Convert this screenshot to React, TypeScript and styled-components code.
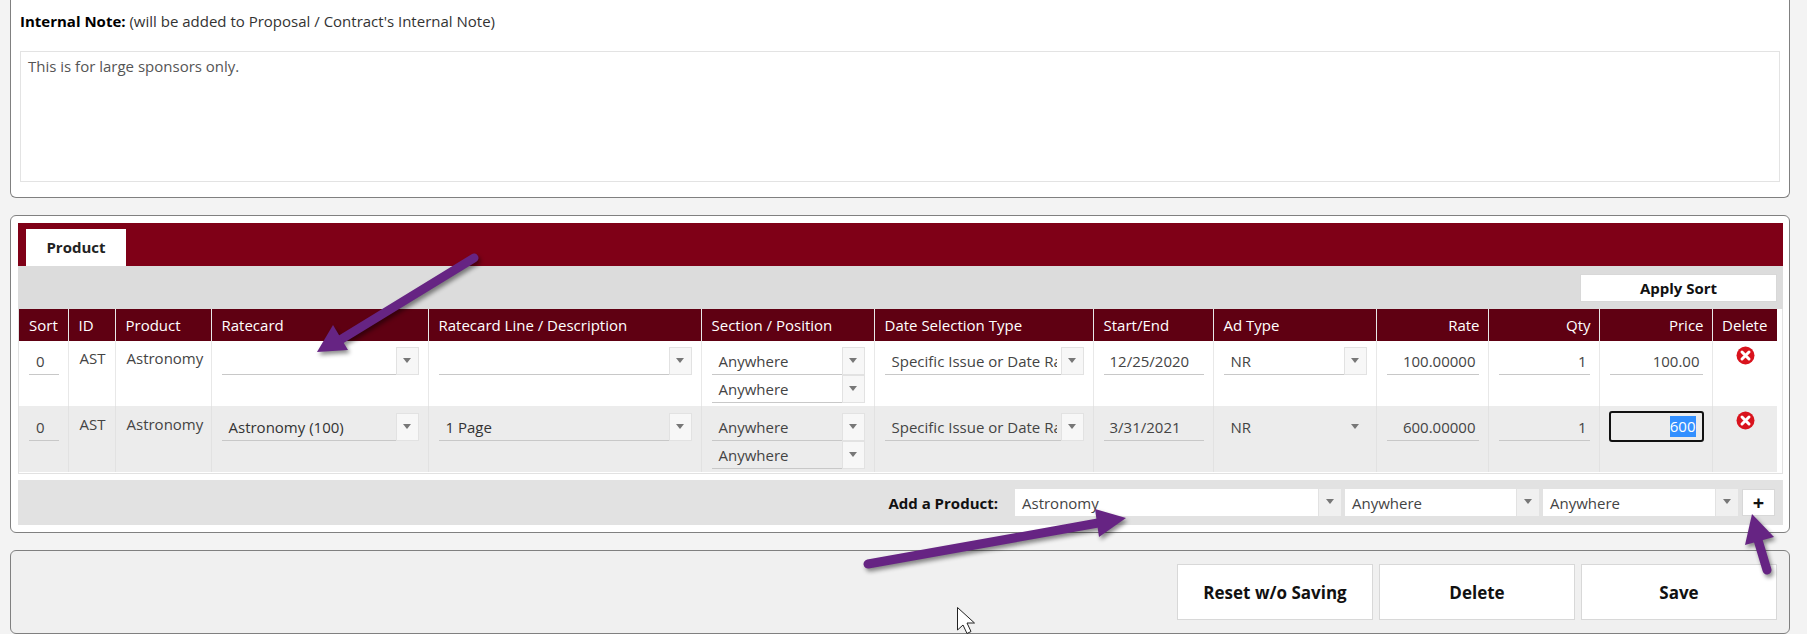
import { FC } from 'react'
import styled, { createGlobalStyle } from 'styled-components'

const GlobalStyle = createGlobalStyle`
  html, body {
    margin: 0;
    padding: 0;
    background: #f3f3f3;
  }

  * {
    box-sizing: border-box;
  }
`

const Page = styled.div`
  position: relative;
  width: 1807px;
  height: 634px;
  overflow: hidden;
  padding: 0 17px 0 10px;
  font-family: 'Open Sans', 'Noto Sans', sans-serif;
  font-size: 15px;
  color: #444;
`

const Panel = styled.section`
  background: #fff;
  border: 1px solid #808080;
  border-radius: 6px;
  margin-bottom: 17px;
  padding: 7px 6px 7px 7px;
`

const NotePanel = styled(Panel)`
  height: 198px;
  padding: 11px 9px 0;
  border-top: none;
  border-radius: 0 0 6px 6px;
`

const NoteLabel = styled.div`
  height: 20px;
  line-height: 20px;
  margin-bottom: 20px;
  color: #333;

  b {
    color: #000;
    font-weight: 700;
  }
`

const NoteBox = styled.div`
  height: 131px;
  padding: 5px 7px;
  border: 1px solid #e3e3e3;
  line-height: 18px;
  color: #555;
`

const TabStrip = styled.div`
  display: flex;
  align-items: flex-end;
  height: 43px;
  padding-left: 8px;
  background: #7f0017;
`

const Tab = styled.div`
  width: 100px;
  height: 37px;
  line-height: 37px;
  text-align: center;
  background: #fff;
  color: #222;
  font-weight: 700;
`

const SortBar = styled.div`
  display: flex;
  justify-content: flex-end;
  align-items: center;
  height: 43px;
  padding-right: 6px;
  background: #dcdcdc;
`

const PlainButton = styled.button<{ $big?: boolean }>`
  width: ${({ $big }) => ($big ? '196px' : '197px')};
  height: ${({ $big }) => ($big ? '56px' : '28px')};
  padding: 0;
  background: #fff;
  border: 1px solid #d8d8d8;
  color: #111;
  font-family: inherit;
  font-size: ${({ $big }) => ($big ? '17px' : '15px')};
  font-weight: 700;
`

const TableWrap = styled.div`
  padding: 0 5px 1px 0;
  border: 1px solid #e2e2e2;
  border-top: none;
  margin-bottom: 6px;
`

const Table = styled.table`
  width: 1758px;
  table-layout: fixed;
  border-collapse: collapse;
`

const Col = styled.col<{ $w: number }>`
  width: ${({ $w }) => $w}px;
`

const Th = styled.th<{ $right?: boolean }>`
  height: 32px;
  padding: 0 8px 0 10px;
  background: #5f0012;
  border-right: 1px solid #e8e8e8;
  color: #fff;
  font-weight: 400;
  white-space: nowrap;
  text-align: ${({ $right }) => ($right ? 'right' : 'left')};

  &:last-child {
    border-right: none;
    padding: 0;
    text-align: center;
  }
`

const Tr = styled.tr<{ $alt?: boolean }>`
  background: ${({ $alt }) => ($alt ? '#ececec' : '#fff')};
  height: ${({ $alt }) => ($alt ? '66px' : '65px')};
`

const Td = styled.td<{ $alt?: boolean }>`
  padding: ${({ $alt }) => ($alt ? '7px' : '6px')} 9px 0 10px;
  vertical-align: top;
  border-right: 1px solid ${({ $alt }) => ($alt ? '#e2e2e2' : '#e8e8e8')};

  &:last-child {
    border-right: none;
    padding: 5px 0 0 1px;
    text-align: center;
  }
`

const CellText = styled.div`
  line-height: 22px;
  padding-left: 1px;
  white-space: nowrap;
`

const Field = styled.div<{ $right?: boolean; $center?: boolean }>`
  height: 28px;
  line-height: 28px;
  padding: 0 ${({ $right }) => ($right ? '3px' : '6px')} 0 ${({ $center }) => ($center ? '7px' : '6px')};
  border-bottom: 1px solid #c8c8c8;
  text-align: ${({ $right }) => ($right ? 'right' : 'left')};
`

const Combo = styled.div<{ $bare?: boolean }>`
  display: flex;
  height: 28px;
  border-bottom: ${({ $bare }) => ($bare ? 'none' : '1px solid #c8c8c8')};
`

const ComboText = styled.div<{ $dark?: boolean }>`
  flex: 1;
  min-width: 0;
  overflow: hidden;
  white-space: nowrap;
  line-height: 29px;
  margin-right: 4px;
  padding-left: 7px;
  color: ${({ $dark }) => ($dark ? '#333' : '#444')};
`

const ComboButton = styled.div<{ $bare?: boolean }>`
  display: flex;
  flex: none;
  align-items: center;
  justify-content: center;
  width: 23px;
  height: 28px;
  padding-bottom: 2px;
  background: ${({ $bare }) => ($bare ? 'transparent' : '#f7f7f7')};
  border: 1px solid ${({ $bare }) => ($bare ? 'transparent' : '#e2e2e2')};

  &::after {
    content: '';
    border-left: 4px solid transparent;
    border-right: 4px solid transparent;
    border-top: 5px solid #777;
  }
`

const FocusedField = styled.div`
  height: 31px;
  margin: -2px -1px 0;
  padding-right: 6px;
  background: transparent;
  border: 2px solid #111;
  border-radius: 3px;
  line-height: 27px;
  text-align: right;

  span {
    display: inline-block;
    height: 21px;
    line-height: 21px;
    background: #3390ff;
    color: #fff;
  }
`

const AddBar = styled.div`
  display: flex;
  justify-content: flex-end;
  align-items: center;
  height: 45px;
  padding-right: 8px;
  background: #e2e2e2;
`

const AddLabel = styled.label`
  margin-right: 17px;
  color: #111;
  font-weight: 700;
`

const AddCombo = styled.div<{ $w: number }>`
  display: flex;
  width: ${({ $w }) => $w}px;
  height: 27px;
  margin-right: 4px;
  background: #fff;
`

const AddText = styled.div`
  flex: 1;
  line-height: 28px;
  padding-left: 7px;
  color: #444;
`

const AddArrow = styled(ComboButton)`
  height: 27px;
  background: #f0f0f0;
  border: none;
  border-left: 1px solid #e2e2e2;
`

const PlusButton = styled.button`
  width: 33px;
  height: 27px;
  padding: 0;
  background: #fff;
  border: 1px solid #d8d8d8;
  color: #111;
  font-family: inherit;
  font-size: 20px;
  font-weight: 700;
  line-height: 22px;
`

const ActionPanel = styled(Panel)`
  display: flex;
  justify-content: flex-end;
  gap: 6px;
  height: 84px;
  margin: 0;
  padding: 13px 12px 0 0;
  background: #f0f0f0;
`

const Overlay = styled.svg`
  position: absolute;
  top: 0;
  left: 0;
  pointer-events: none;
`

const PurpleArrow = styled.g`
  filter: drop-shadow(2px 3px 2px rgba(0, 0, 0, 0.45));
`

const DeleteIcon: FC = () => (
  <svg width='19' height='19' viewBox='0 0 19 19'>
    <circle cx='9.5' cy='9.5' r='9' fill='#d9131d' />
    <path d='M6 6l7 7M13 6l-7 7' stroke='#fff' strokeWidth='3' strokeLinecap='round' />
  </svg>
)

const columns = [49, 47, 96, 217, 273, 173, 219, 120, 163, 112, 111, 113, 65]

const DATE_TYPE = 'Specific Issue or Date Range'

const App: FC = () => {
  return (
    <Page>
      <GlobalStyle />

      <NotePanel>
        <NoteLabel>
          <b>Internal Note:</b> (will be added to Proposal / Contract's Internal Note)
        </NoteLabel>
        <NoteBox>This is for large sponsors only.</NoteBox>
      </NotePanel>

      <Panel>
        <TabStrip>
          <Tab>Product</Tab>
        </TabStrip>
        <SortBar>
          <PlainButton>Apply Sort</PlainButton>
        </SortBar>

        <TableWrap>
          <Table>
            <colgroup>
              {columns.map((w, i) => (
                <Col key={i} $w={w} />
              ))}
            </colgroup>
            <thead>
              <tr>
                <Th>Sort</Th>
                <Th>ID</Th>
                <Th>Product</Th>
                <Th>Ratecard</Th>
                <Th>Ratecard Line / Description</Th>
                <Th>Section / Position</Th>
                <Th>Date Selection Type</Th>
                <Th>Start/End</Th>
                <Th>Ad Type</Th>
                <Th $right>Rate</Th>
                <Th $right>Qty</Th>
                <Th $right>Price</Th>
                <Th>Delete</Th>
              </tr>
            </thead>
            <tbody>
              <Tr>
                <Td><Field $center>0</Field></Td>
                <Td><CellText>AST</CellText></Td>
                <Td><CellText>Astronomy</CellText></Td>
                <Td>
                  <Combo>
                    <ComboText />
                    <ComboButton />
                  </Combo>
                </Td>
                <Td>
                  <Combo>
                    <ComboText />
                    <ComboButton />
                  </Combo>
                </Td>
                <Td>
                  <Combo>
                    <ComboText>Anywhere</ComboText>
                    <ComboButton />
                  </Combo>
                  <Combo>
                    <ComboText>Anywhere</ComboText>
                    <ComboButton />
                  </Combo>
                </Td>
                <Td>
                  <Combo>
                    <ComboText>{DATE_TYPE}</ComboText>
                    <ComboButton />
                  </Combo>
                </Td>
                <Td><Field>12/25/2020</Field></Td>
                <Td>
                  <Combo>
                    <ComboText>NR</ComboText>
                    <ComboButton />
                  </Combo>
                </Td>
                <Td><Field $right>100.00000</Field></Td>
                <Td><Field $right>1</Field></Td>
                <Td><Field $right>100.00</Field></Td>
                <Td><DeleteIcon /></Td>
              </Tr>
              <Tr $alt>
                <Td $alt><Field $center>0</Field></Td>
                <Td $alt><CellText>AST</CellText></Td>
                <Td $alt><CellText>Astronomy</CellText></Td>
                <Td $alt>
                  <Combo>
                    <ComboText $dark>Astronomy (100)</ComboText>
                    <ComboButton />
                  </Combo>
                </Td>
                <Td $alt>
                  <Combo>
                    <ComboText $dark>1 Page</ComboText>
                    <ComboButton />
                  </Combo>
                </Td>
                <Td $alt>
                  <Combo>
                    <ComboText>Anywhere</ComboText>
                    <ComboButton />
                  </Combo>
                  <Combo>
                    <ComboText>Anywhere</ComboText>
                    <ComboButton />
                  </Combo>
                </Td>
                <Td $alt>
                  <Combo>
                    <ComboText>{DATE_TYPE}</ComboText>
                    <ComboButton />
                  </Combo>
                </Td>
                <Td $alt><Field>3/31/2021</Field></Td>
                <Td $alt>
                  <Combo $bare>
                    <ComboText>NR</ComboText>
                    <ComboButton $bare />
                  </Combo>
                </Td>
                <Td $alt><Field $right>600.00000</Field></Td>
                <Td $alt><Field $right>1</Field></Td>
                <Td $alt>
                  <FocusedField><span>600</span></FocusedField>
                </Td>
                <Td $alt><DeleteIcon /></Td>
              </Tr>
            </tbody>
          </Table>
        </TableWrap>

        <AddBar>
          <AddLabel>Add a Product:</AddLabel>
          <AddCombo $w={326}>
            <AddText>Astronomy</AddText>
            <AddArrow />
          </AddCombo>
          <AddCombo $w={194}>
            <AddText>Anywhere</AddText>
            <AddArrow />
          </AddCombo>
          <AddCombo $w={195}>
            <AddText>Anywhere</AddText>
            <AddArrow />
          </AddCombo>
          <PlusButton>+</PlusButton>
        </AddBar>
      </Panel>

      <ActionPanel>
        <PlainButton $big>Reset w/o Saving</PlainButton>
        <PlainButton $big>Delete</PlainButton>
        <PlainButton $big>Save</PlainButton>
      </ActionPanel>

      <Overlay width='1807' height='634' viewBox='0 0 1807 634'>
        <PurpleArrow>
          <path d='M474 258L340 340' stroke='#662483' strokeWidth='9' strokeLinecap='round' />
          <path d='M317 352L333 325L348 350Z' fill='#662483' />
        </PurpleArrow>
        <PurpleArrow>
          <path d='M868 564L1098 523' stroke='#662483' strokeWidth='9' strokeLinecap='round' />
          <path d='M1126 518L1095 509L1099 537Z' fill='#662483' />
        </PurpleArrow>
        <PurpleArrow>
          <path d='M1767 570L1758 540' stroke='#662483' strokeWidth='9' strokeLinecap='round' />
          <path d='M1752 514L1745 545L1774 537Z' fill='#662483' />
        </PurpleArrow>
        <path
          d='M957.5 607.5V630l5.5-5 4 8.5 4-2-4-8.5h7.5Z'
          fill='#fff'
          stroke='#222'
          strokeWidth='1'
          strokeLinejoin='round'
        />
      </Overlay>
    </Page>
  )
}

export default App
